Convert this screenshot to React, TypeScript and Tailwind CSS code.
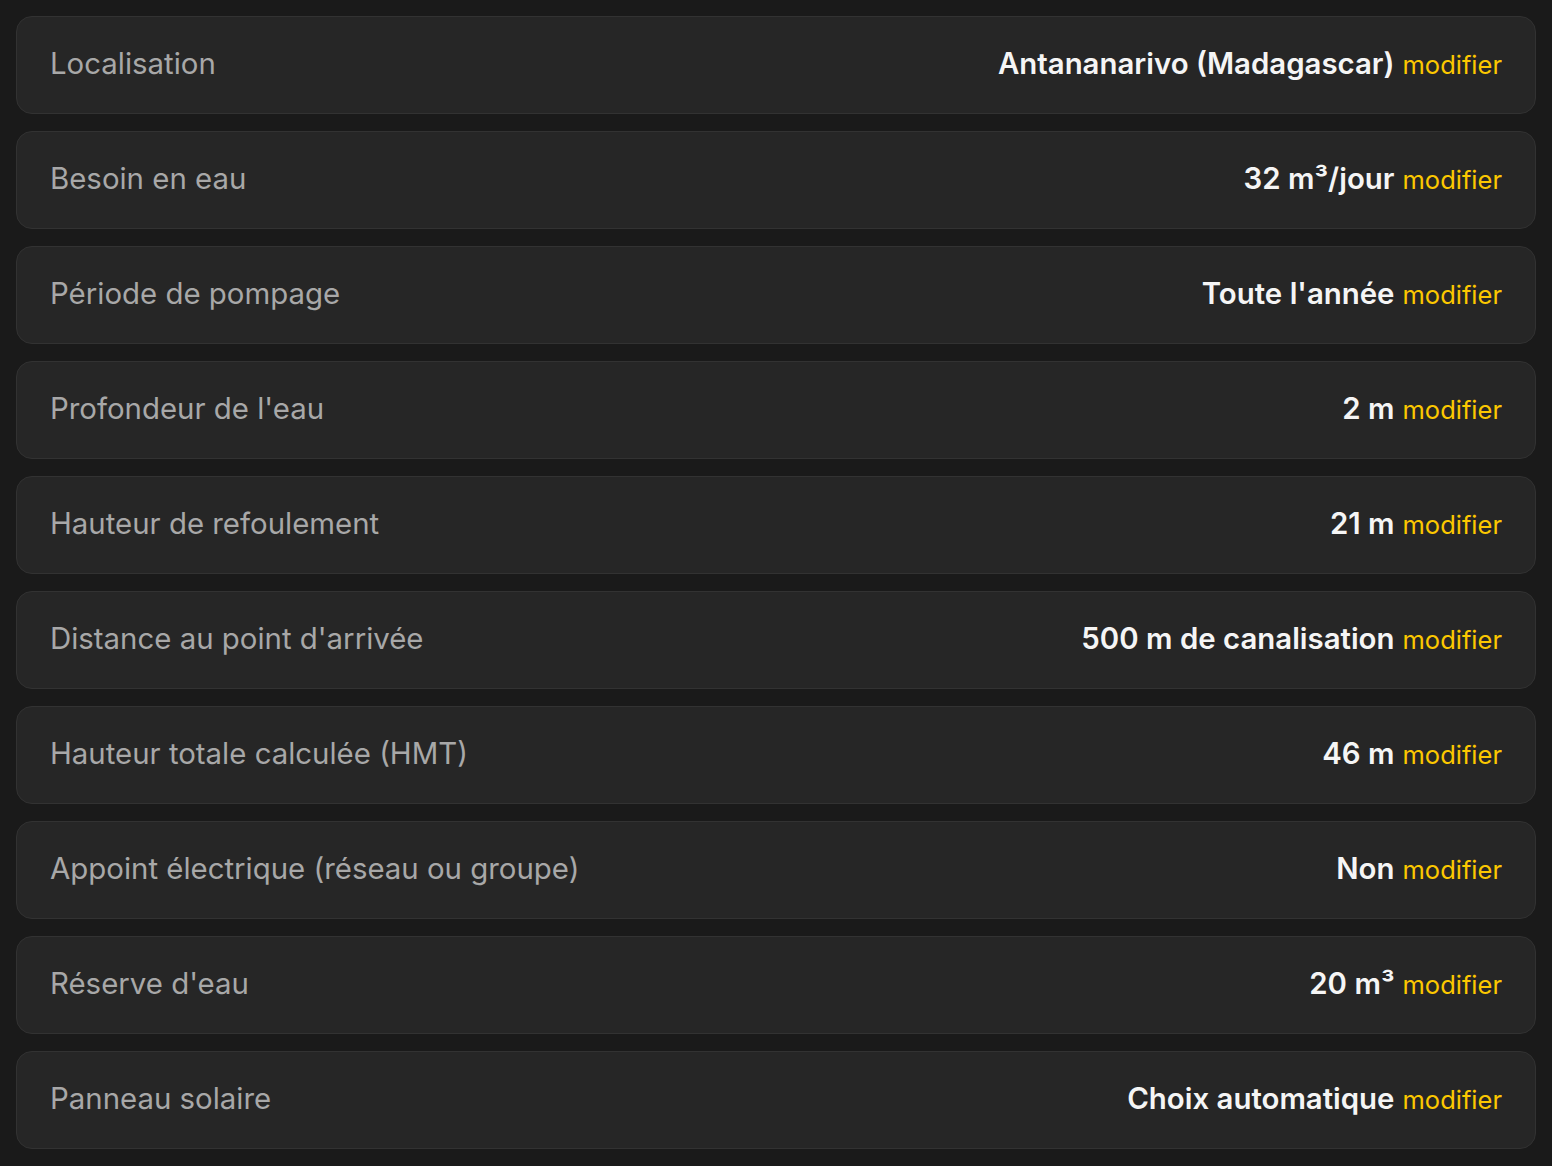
import React from 'react';

interface Row {
  label: string;
  value: React.ReactNode;
}

const rows: Row[] = [
  { label: 'Localisation', value: 'Antananarivo (Madagascar)' },
  { label: 'Besoin en eau', value: '32 m³/jour' },
  { label: 'Période de pompage', value: "Toute l'année" },
  { label: "Profondeur de l'eau", value: '2 m' },
  { label: 'Hauteur de refoulement', value: '21 m' },
  { label: "Distance au point d'arrivée", value: '500 m de canalisation' },
  { label: 'Hauteur totale calculée (HMT)', value: '46 m' },
  { label: 'Appoint électrique (réseau ou groupe)', value: 'Non' },
  { label: "Réserve d'eau", value: '20 m³' },
  { label: 'Panneau solaire', value: 'Choix automatique' },
];

const SummaryRow: React.FC<Row> = ({ label, value }) => (
  <div className="flex h-[98px] items-center justify-between rounded-[16px] border-[1.5px] border-[#323232] bg-[#262626] pb-[2px] pl-[33px] pr-[33px]">
    <span className="text-[29.4px] leading-none text-[#a8a8a8]">{label}</span>
    <span className="flex items-baseline gap-[8px]">
      <span className="text-[29.4px] font-semibold leading-none text-[#f5f5f5]">{value}</span>
      <button className="text-[25.5px] leading-none text-[#fcc800]">modifier</button>
    </span>
  </div>
);

export default function App() {
  return (
    <div
      className="min-h-screen bg-[#1a1a1a] p-[16px]"
      style={{ fontFamily: 'Inter, "Noto Sans", sans-serif' }}
    >
      <div className="flex flex-col gap-[17px]">
        {rows.map((r) => (
          <SummaryRow key={r.label} label={r.label} value={r.value} />
        ))}
      </div>
    </div>
  );
}
